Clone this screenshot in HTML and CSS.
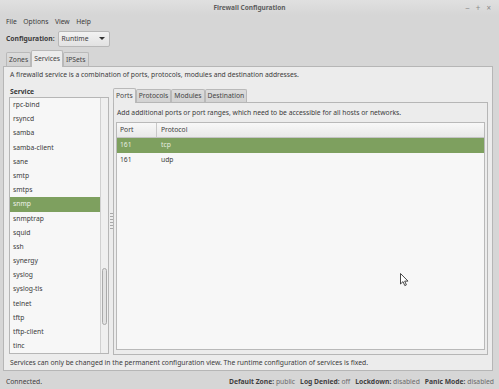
FILE: index.html
```html
<!DOCTYPE html>
<html>
<head>
<meta charset="utf-8">
<link rel="stylesheet" href="styles.css">
</head>
<body>
<div class="window">
  <div class="titlebar">
    <span></span>
    <span class="title">Firewall Configuration</span>
    <div class="wm"><span>−</span><span>+</span><span>×</span></div>
  </div>
  <div class="menubar"><span>File</span><span>Options</span><span>View</span><span>Help</span></div>
  <div class="configrow">
    <span class="bold">Configuration:</span>
    <div class="combo"><span>Runtime</span><span class="arrow"></span></div>
  </div>
  <div class="tabs outer-tabs">
    <div class="tab">Zones</div>
    <div class="tab active">Services</div>
    <div class="tab">IPSets</div>
  </div>
  <div class="outer-page">
    <div class="desc">A firewalld service is a combination of ports, protocols, modules and destination addresses.</div>
    <div class="split">
      <div class="left">
        <div class="label bold">Service</div>
        <div class="list">
          <div class="items">
            <div class="item">rpc-bind</div>
            <div class="item">rsyncd</div>
            <div class="item">samba</div>
            <div class="item">samba-client</div>
            <div class="item">sane</div>
            <div class="item">smtp</div>
            <div class="item">smtps</div>
            <div class="item sel">snmp</div>
            <div class="item">snmptrap</div>
            <div class="item">squid</div>
            <div class="item">ssh</div>
            <div class="item">synergy</div>
            <div class="item">syslog</div>
            <div class="item">syslog-tls</div>
            <div class="item">telnet</div>
            <div class="item">tftp</div>
            <div class="item">tftp-client</div>
            <div class="item">tinc</div>
          </div>
          <div class="scrollbar"><div class="thumb"></div></div>
        </div>
      </div>
      <div class="handle"><div class="grip"></div></div>
      <div class="right">
        <div class="tabs inner-tabs">
          <div class="tab active">Ports</div>
          <div class="tab">Protocols</div>
          <div class="tab">Modules</div>
          <div class="tab">Destination</div>
        </div>
        <div class="inner-page">
          <div class="desc2">Add additional ports or port ranges, which need to be accessible for all hosts or networks.</div>
          <div class="table">
            <div class="thead">
              <div class="c1">Port</div>
              <div class="c2">Protocol</div>
            </div>
            <div class="row sel"><div class="c1">161</div><div class="c2">tcp</div></div>
            <div class="row"><div class="c1">161</div><div class="c2">udp</div></div>
          </div>
        </div>
      </div>
    </div>
    <div class="footer">Services can only be changed in the permanent configuration view. The runtime configuration of services is fixed.</div>
  </div>
  <div class="statusbar">
    <span>Connected.</span>
    <div class="status-right">
      <span><b>Default Zone:</b> <span class="val">public</span></span>
      <span><b>Log Denied:</b> <span class="val">off</span></span>
      <span><b>Lockdown:</b> <span class="val">disabled</span></span>
      <span><b>Panic Mode:</b> <span class="val">disabled</span></span>
    </div>
  </div>
</div>
<svg class="cursor" width="9" height="14" viewBox="0 0 9 14"><path d="M0.5 0.5 L0.5 11 L3 8.6 L4.8 12.6 L6.4 11.9 L4.7 8.1 L8 8.1 Z" fill="#ffffff" stroke="#333" stroke-width="0.9" stroke-linejoin="round"/></svg>
</body>
</html>
```

FILE: styles.css
```css
* { box-sizing: border-box; margin: 0; padding: 0; }
html, body { width: 499px; height: 389px; overflow: hidden; }
body {
  background: #d6d6d6;
  font-family: "Noto Sans", sans-serif;
  font-size: 6.75px;
  color: #3b3b3b;
  position: relative;
}
.bold, b { font-weight: bold; }
.window { display: flex; flex-direction: column; height: 389px; }

.titlebar {
  height: 15px;
  display: grid;
  grid-template-columns: 1fr auto 1fr;
  align-items: center;
  background: linear-gradient(#e0e0e0, #d6d6d6);
}
.title { font-weight: bold; color: #5e5e5e; font-size: 6.5px; }
.wm { justify-self: end; display: flex; gap: 6px; padding-right: 8px; color: #8a8a8a; font-size: 8px; line-height: 15px; }

.menubar { height: 12px; display: flex; align-items: center; gap: 6.5px; padding-left: 6px; padding-top: 1px; }

.configrow { height: 23px; display: flex; align-items: center; padding-left: 6px; gap: 3px; }
.combo {
  width: 52px; height: 16px;
  border: 1px solid #b8b8b8; border-radius: 2px;
  background: linear-gradient(#f2f2f2, #e2e2e2);
  display: flex; align-items: center; justify-content: space-between;
  padding: 0 4px 0 3px;
}
.arrow { width: 0; height: 0; border-left: 3px solid transparent; border-right: 3px solid transparent; border-top: 3px solid #333; }

.tabs { display: flex; align-items: flex-end; }
.outer-tabs { height: 16px; padding-left: 6px; position: relative; z-index: 1; }
.tab {
  height: 14px; line-height: 13px; padding: 0 2px;
  border: 1px solid #b9b9b9; border-bottom: none;
  background: linear-gradient(#dcdcdc, #d2d2d2);
  border-radius: 2px 2px 0 0;
  color: #444;
  white-space: nowrap;
}
.tab.active { line-height: 16px; background: #ececec; margin-bottom: -1px; height: 17px; }

.outer-page {
  margin: 0 6px 0 3px;
  height: 305px;
  border: 1px solid #b6b6b6;
  background: #ececec;
  padding: 3px 4px 0 5px;
  display: flex; flex-direction: column;
}
.desc { height: 10px; line-height: 10px; padding-left: 1px; white-space: nowrap; }
.split { margin-top: 6px; height: 269px; display: flex; }
.left { width: 100px; display: flex; flex-direction: column; }
.label { height: 11px; line-height: 11px; padding-left: 1px; }
.list {
  height: 257px;
  border: 1px solid #b6b6b6;
  background: #f7f7f7;
  display: flex;
  overflow: hidden;
}
.items { flex: 1; }
.item { height: 14.2px; line-height: 14.2px; padding-left: 3px; white-space: nowrap; }
.item.sel { background: #7ea05f; color: #eef2e9; }
.scrollbar { width: 8px; border-left: 1px solid #d0d0d0; background: #efefef; padding: 170px 0 0 1px; }
.thumb { width: 5px; height: 57px; border: 1px solid #a9a9a9; border-radius: 3px; background: #e2e2e2; }

.handle { width: 4px; display: flex; justify-content: center; padding-top: 127px; }
.grip { width: 3px; height: 17px; background: repeating-linear-gradient(#a8a8a8 0 1px, transparent 1px 3px); }

.right { flex: 1; display: flex; flex-direction: column; }
.inner-tabs { height: 14px; margin-top: 2px; position: relative; z-index: 1; }
.inner-tabs .tab { height: 13px; line-height: 12px; }
.inner-tabs .tab.active { height: 15px; line-height: 14px; }
.inner-page {
  flex: 1;
  border: 1px solid #b6b6b6;
  background: #ececec;
  padding: 5px 2px 4px 2px;
  display: flex; flex-direction: column;
}
.desc2 { height: 10px; line-height: 10px; padding-left: 1px; white-space: nowrap; }
.table {
  margin-top: 4px; flex: 1;
  border: 1px solid #b9b9b9;
  background: #f7f7f7;
}
.thead {
  height: 15px; display: flex;
  background: linear-gradient(#f8f8f8, #e9e9e9);
  border-bottom: 1px solid #c4c4c4;
  line-height: 14px;
}
.thead .c1 { border-right: 1px solid #c8c8c8; }
.c1 { width: 40px; padding-left: 3px; }
.c2 { flex: 1; padding-left: 4px; }
.row { height: 14.5px; line-height: 14.5px; display: flex; }
.row.sel { background: #7ea05f; color: #e6ede0; }

.footer { height: 15px; line-height: 15px; padding-left: 1px; white-space: nowrap; }

.statusbar { flex: 1; display: flex; justify-content: space-between; align-items: center; padding: 2px 5px 0 6px; color: #3e3e3e; }
.status-right { display: flex; gap: 5px; }
.val { color: #6a6a6a; }

.cursor { position: absolute; left: 400px; top: 273px; }
```
